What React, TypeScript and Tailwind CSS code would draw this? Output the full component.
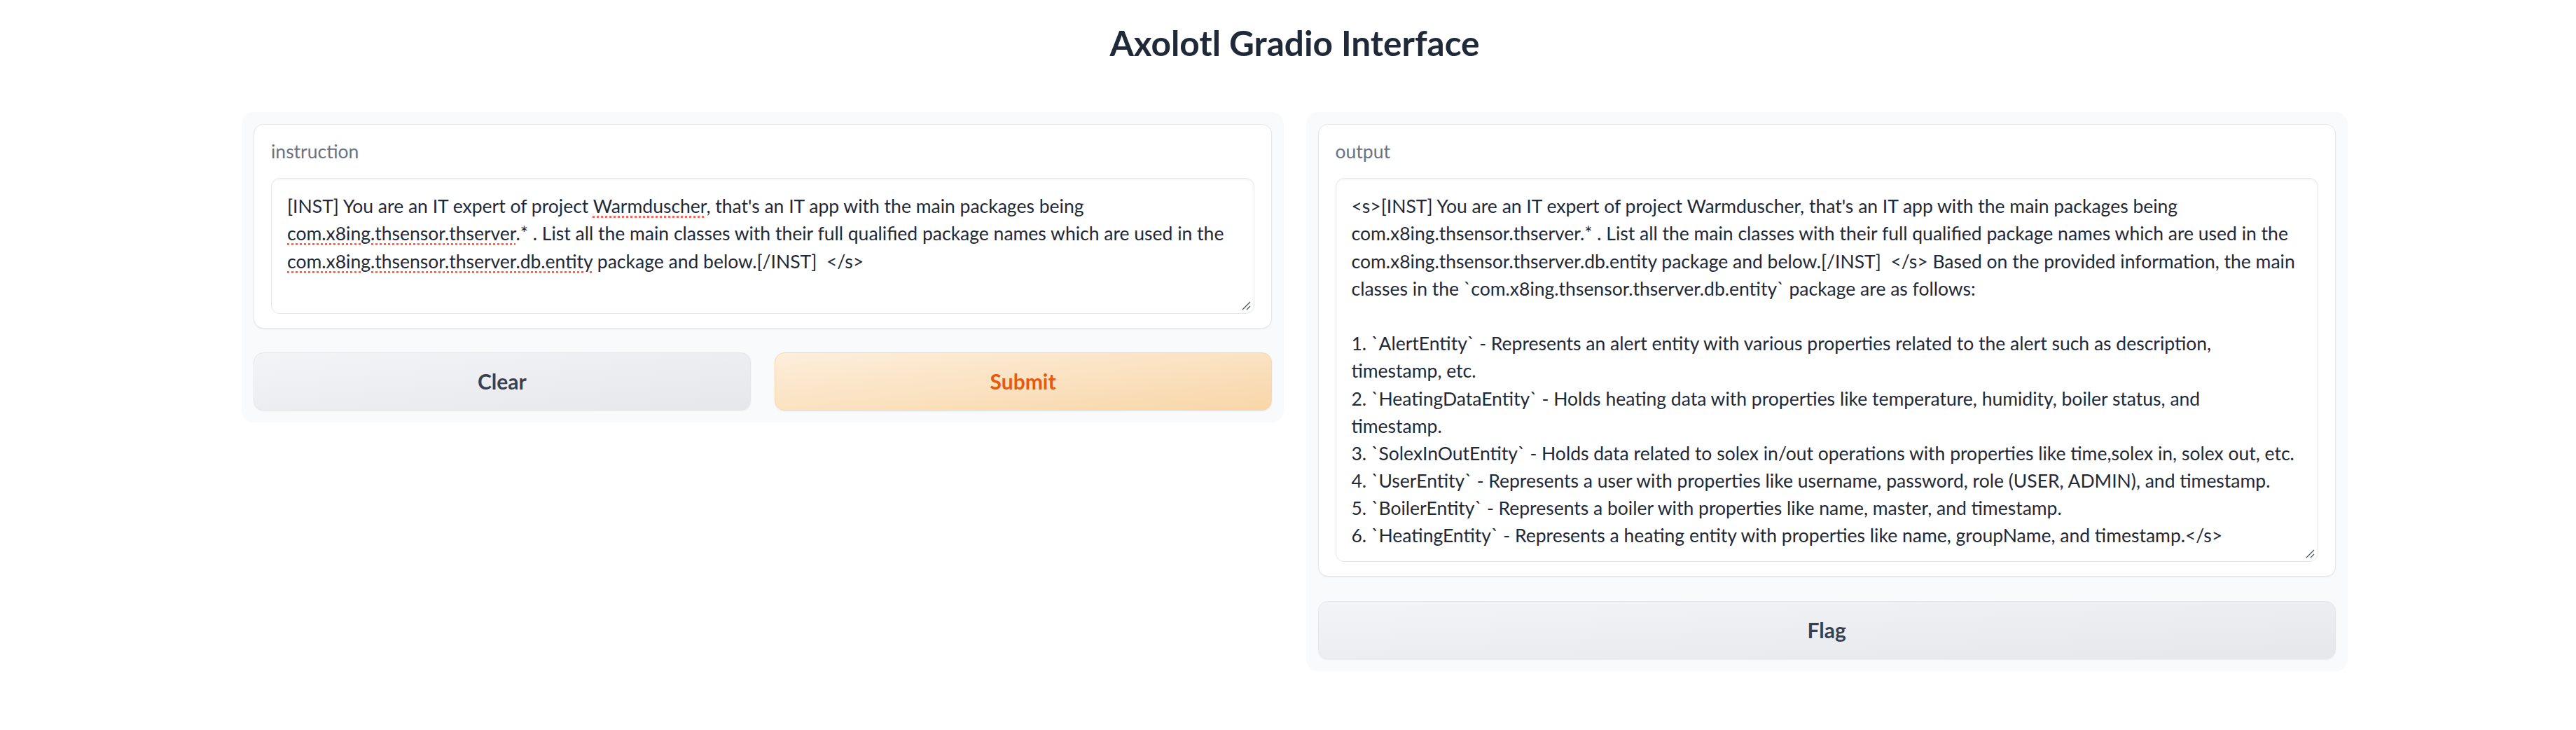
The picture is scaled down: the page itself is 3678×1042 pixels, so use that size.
import React from 'react';

const outputLines = [
    "<s>[INST] You are an IT expert of project Warmduscher, that's an IT app with the main packages being",
    "com.x8ing.thsensor.thserver.* . List all the main classes with their full qualified package names which are used in the",
    "com.x8ing.thsensor.thserver.db.entity package and below.[/INST]  </s> Based on the provided information, the main",
    "classes in the `com.x8ing.thsensor.thserver.db.entity` package are as follows:",
    "",
    "1. `AlertEntity` - Represents an alert entity with various properties related to the alert such as description,",
    "timestamp, etc.",
    "2. `HeatingDataEntity` - Holds heating data with properties like temperature, humidity, boiler status, and",
    "timestamp.",
    "3. `SolexInOutEntity` - Holds data related to solex in/out operations with properties like time,solex in, solex out, etc.",
    "4. `UserEntity` - Represents a user with properties like username, password, role (USER, ADMIN), and timestamp.",
    "5. `BoilerEntity` - Represents a boiler with properties like name, master, and timestamp.",
    "6. `HeatingEntity` - Represents a heating entity with properties like name, groupName, and timestamp.</s>",
];

// red dotted spell-check squiggle
const Misspelled: React.FC<{ children: React.ReactNode }> = ({ children }) => (
    <span className="underline decoration-dotted decoration-[#ef6b5e] decoration-[3px] underline-offset-[4px]">
        {children}
    </span>
);

const ResizeGrip = () => (
    <svg className="absolute bottom-[4px] right-[4px]" width="14" height="14" viewBox="0 0 14 14">
        <path d="M13 2 L2 13 M13 8 L8 13" stroke="#4b5563" strokeWidth="1.3" fill="none" />
    </svg>
);

const Field: React.FC<{ label: string; areaClass: string; children: React.ReactNode }> = ({ label, areaClass, children }) => (
    <div className="bg-white border border-[#e5e7eb] rounded-[14px] shadow-[0_1px_2px_rgba(0,0,0,0.06)] px-[24px] pt-[19px] pb-[20px]">
        <div className="text-[#6b7280] leading-[39.2px]">{label}</div>
        <div className={`relative mt-[18px] bg-white border border-[#e5e7eb] rounded-[12px] shadow-[inset_0_2px_3px_rgba(0,0,0,0.04)] pl-[22px] pt-[20px] text-[#1f2937] whitespace-pre ${areaClass}`}>
            {children}
            <ResizeGrip />
        </div>
    </div>
);

const App: React.FC = () => {
    return (
        <div className="min-h-screen bg-white font-['Lato',sans-serif] text-[26.5px]">
            <header className="pt-[32px] pb-[69px] pl-[345px] pr-[326px] text-center">
                <h1 className="text-[49.5px] leading-[59px] font-bold text-[#1f2937]">Axolotl Gradio Interface</h1>
            </header>

            <div className="flex items-start gap-[32px] pl-[345px] pr-[326px]">
                {/* Input column */}
                <div className="flex-1 bg-[#f9fafb] rounded-[17px] p-[17px] flex flex-col gap-[34px]">
                    <Field label="instruction" areaClass="h-[194px]">
                        <div className="leading-[39.2px]">
                            [INST] You are an IT expert of project <Misspelled>Warmduscher</Misspelled>, that's an IT app with the main packages being
                        </div>
                        <div className="leading-[39.2px]">
                            <Misspelled>com.x8ing.thsensor.thserver</Misspelled>.* . List all the main classes with their full qualified package names which are used in the
                        </div>
                        <div className="leading-[39.2px]">
                            <Misspelled>com.x8ing.thsensor.thserver.db.entity</Misspelled>{" package and below.[/INST]  </s>"}
                        </div>
                    </Field>
                    <div className="grid grid-cols-2 gap-[34px]">
                        <button className="h-[83px] rounded-[14px] border border-[#e5e7eb] bg-gradient-to-br from-[#f3f4f6] to-[#e5e7eb] shadow-[0_1px_2px_rgba(0,0,0,0.06)] text-[30px] font-bold text-[#374151]">
                            Clear
                        </button>
                        <button className="h-[83px] rounded-[14px] border border-[#f8d8ad] bg-gradient-to-br from-[#fdeedb] to-[#f8d6a8] shadow-[0_1px_2px_rgba(0,0,0,0.08)] text-[30px] font-bold text-[#ea580c]">
                            Submit
                        </button>
                    </div>
                </div>

                {/* Output column */}
                <div className="flex-1 bg-[#f9fafb] rounded-[17px] p-[17px] flex flex-col gap-[35px]">
                    <Field label="output" areaClass="h-[548px]">
                        {outputLines.map((line, i) => (
                            <div key={i} className="leading-[39.2px] h-[39.2px]">{line}</div>
                        ))}
                    </Field>
                    <button className="h-[83px] rounded-[14px] border border-[#e5e7eb] bg-gradient-to-br from-[#f3f4f6] to-[#e5e7eb] shadow-[0_1px_2px_rgba(0,0,0,0.06)] text-[30px] font-bold text-[#374151]">
                        Flag
                    </button>
                </div>
            </div>
        </div>
    );
};

export default App;
